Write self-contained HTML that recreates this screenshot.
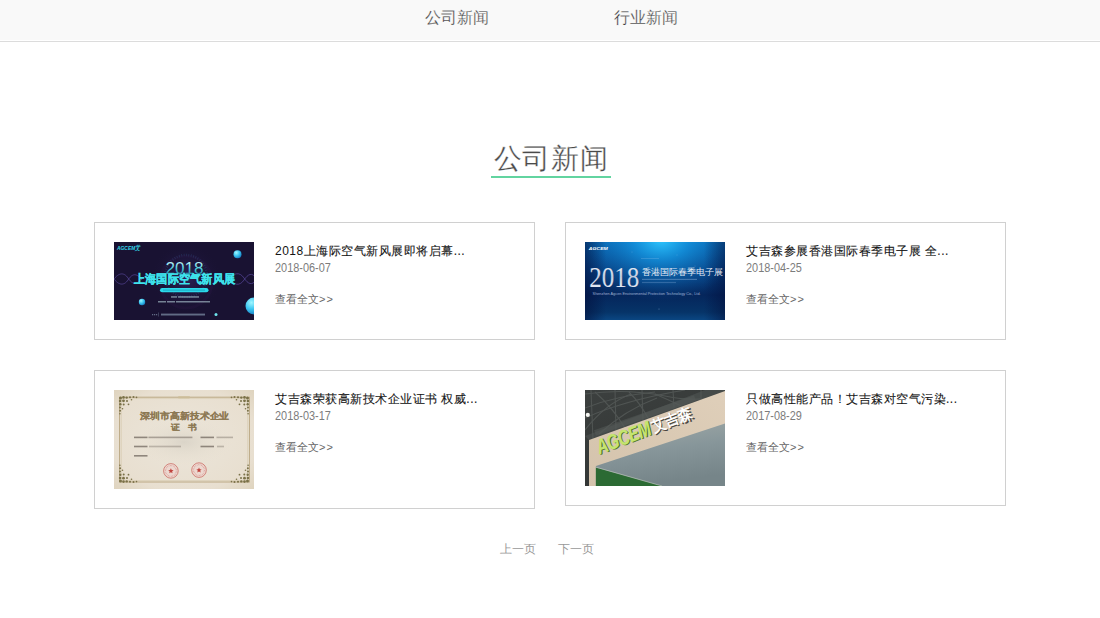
<!DOCTYPE html>
<html><head><meta charset="utf-8">
<style>
*{margin:0;padding:0;box-sizing:border-box}
html,body{width:1100px;height:618px;overflow:hidden;background:#fff;font-family:"Liberation Sans",sans-serif;color:#333}
.hdr{position:absolute;left:0;top:0;width:1100px;height:40px;background:#f9f9f9}
.hline{position:absolute;left:0;top:41px;width:1100px;height:1px;background:#dcdcdc}
.nav{position:absolute;top:8px;font-size:16px;color:#3a3a3a;-webkit-text-stroke:0.25px #f9f9f9;line-height:20px;white-space:nowrap}
.ttl{position:absolute;left:1px;top:142px;width:1100px;text-align:center;font-size:28px;line-height:34px;color:#4a4a4a;font-weight:300;letter-spacing:0.6px;-webkit-text-stroke:0.3px #fff}
.uline{position:absolute;left:491px;top:176px;width:120px;height:2px;background:#62d4a0}
.card{position:absolute;width:441px;border:1px solid #d0d0d0;background:#fff}
.pic{position:absolute;left:19px;top:19px;width:140px;overflow:hidden}
.pic svg{display:block}
.t{position:absolute;left:180px;letter-spacing:0.5px;font-size:12px;color:#151515;-webkit-text-stroke:0.1px #151515;white-space:nowrap;line-height:18px}
.d{position:absolute;left:180px;font-size:13px;color:#7c7c7c;white-space:nowrap;line-height:16px;transform:scaleX(0.84);transform-origin:0 0}
.m{position:absolute;left:180px;font-size:11px;color:#666;white-space:nowrap;line-height:16px}
.pg{position:absolute;top:541px;font-size:12px;color:#999;line-height:16px}
</style></head><body>
<div class="hdr"></div><div class="hline"></div>
<div class="nav" style="left:425px">公司新闻</div>
<div class="nav" style="left:614px">行业新闻</div>
<div class="ttl">公司新闻</div>
<div class="uline"></div>

<div class="card" style="left:94px;top:222px;height:118px">
  <div class="pic" style="height:78px"><svg width="140" height="78" viewBox="0 0 140 78">
<defs>
<radialGradient id="g1c" cx="0.35" cy="0.3" r="0.7"><stop offset="0" stop-color="#a0f6ff"/><stop offset="0.55" stop-color="#3cc6f0"/><stop offset="1" stop-color="#1b86c8"/></radialGradient>
<radialGradient id="g1glow" cx="0.5" cy="0.5" r="0.5"><stop offset="0" stop-color="#2f2560" stop-opacity="0.9"/><stop offset="1" stop-color="#191232" stop-opacity="0"/></radialGradient>
<linearGradient id="g1t" x1="0" y1="0" x2="0" y2="1"><stop offset="0" stop-color="#d8fcff"/><stop offset="0.55" stop-color="#39c9d6"/><stop offset="1" stop-color="#1b5d80"/></linearGradient>
</defs>
<rect width="140" height="78" fill="#191232"/>
<circle cx="72" cy="36" r="36" fill="url(#g1glow)"/>
<circle cx="72" cy="34" r="21" fill="none" stroke="#2d5a86" stroke-width="2.5" stroke-dasharray="0.8 1.6" opacity="0.4"/>
<circle cx="72" cy="40" r="26" fill="none" stroke="#3a1e55" stroke-width="3" opacity="0.18"/>
<g fill="none" stroke="#5b4aa0" stroke-width="0.8" opacity="0.85">
<path d="M-2 40 C4 30 10 30 14 36 S 22 44 28 36"/>
<path d="M-2 34 C4 44 10 44 14 38 S 22 30 28 38"/>
<path d="M114 38 C120 30 126 30 130 36 S 138 44 142 38"/>
<path d="M114 36 C120 44 126 44 130 38 S 138 30 142 36"/>
</g>
<text x="3" y="8.2" font-family="Liberation Sans" font-weight="bold" font-style="italic" font-size="6.2" fill="#33d9ea" textLength="23" lengthAdjust="spacingAndGlyphs">AGCEM艾</text>
<text x="70.5" y="32.3" text-anchor="middle" font-family="Liberation Sans" font-size="16" fill="url(#g1t)" textLength="38" lengthAdjust="spacingAndGlyphs">2018</text>
<text x="70.5" y="41.3" text-anchor="middle" font-family="Liberation Sans" font-weight="bold" font-size="11.5" fill="#3ee3ec" stroke="#3ee3ec" stroke-width="0.25" textLength="101" lengthAdjust="spacingAndGlyphs">上海国际空气新风展</text>
<rect x="46" y="46" width="48.5" height="4.3" rx="2.15" fill="#2bd9ea"/>
<rect x="49" y="47.4" width="42" height="1.5" fill="#1a9ab8" opacity="0.55" stroke-dasharray="1 1"/>
<g fill="#d0f2f6" opacity="0.5">
<rect x="57" y="54.2" width="6" height="1.5"/><rect x="64" y="54.2" width="21" height="1.5"/>
<rect x="44" y="59" width="8" height="1.5"/><rect x="53" y="59" width="8" height="1.5"/><rect x="62" y="59" width="34" height="1.5"/>
</g>
<g fill="#b8d8ea" opacity="0.45">
<rect x="38" y="72" width="1.2" height="1.3"/><rect x="40" y="72" width="1.2" height="1.3"/><rect x="42" y="72" width="1.2" height="1.3"/>
<rect x="44.5" y="70.5" width="0.5" height="4"/>
<rect x="47" y="71.6" width="44" height="1.9"/>
</g>
<circle cx="102" cy="72.5" r="1.5" fill="#6fe6ee"/>
<circle cx="123.5" cy="12.3" r="4" fill="url(#g1c)"/>
<circle cx="28" cy="60" r="3.2" fill="url(#g1c)"/>
<circle cx="140" cy="64" r="8.5" fill="url(#g1c)"/>
</svg></div>
  <div class="t" style="top:19px"><span style="-webkit-text-stroke:0">2018</span>上海际空气新风展即将启幕...</div>
  <div class="d" style="top:37px">2018-06-07</div>
  <div class="m" style="top:68px">查看全文<span style="letter-spacing:1.2px">&gt;&gt;</span></div>
</div>
<div class="card" style="left:565px;top:222px;height:118px">
  <div class="pic" style="height:78px"><svg width="140" height="78" viewBox="0 0 140 78">
<defs>
<linearGradient id="g2v" x1="0" y1="0" x2="0" y2="1"><stop offset="0" stop-color="#0b6fba"/><stop offset="0.3" stop-color="#084a8e"/><stop offset="0.68" stop-color="#05265c"/><stop offset="0.9" stop-color="#063468"/><stop offset="1" stop-color="#0a4682"/></linearGradient>
<radialGradient id="g2h" cx="76" cy="-3" r="62" gradientUnits="userSpaceOnUse" gradientTransform="translate(76 -3) scale(1.3 1) translate(-76 3)"><stop offset="0" stop-color="#30c8ff" stop-opacity="1"/><stop offset="0.35" stop-color="#1598e4" stop-opacity="0.7"/><stop offset="1" stop-color="#0a5aa8" stop-opacity="0"/></radialGradient>
<linearGradient id="g2e" x1="0" y1="0" x2="1" y2="0"><stop offset="0" stop-color="#020c38" stop-opacity="0.55"/><stop offset="0.15" stop-color="#020c38" stop-opacity="0"/><stop offset="0.85" stop-color="#020c38" stop-opacity="0"/><stop offset="1" stop-color="#020c38" stop-opacity="0.5"/></linearGradient>
<linearGradient id="g2b" x1="0" y1="0" x2="0" y2="1"><stop offset="0" stop-color="#ffffff"/><stop offset="0.5" stop-color="#c3cde0"/><stop offset="1" stop-color="#f2f5fb"/></linearGradient>
</defs>
<rect width="140" height="78" fill="url(#g2v)"/>
<rect width="140" height="78" fill="url(#g2h)"/>
<rect width="140" height="78" fill="url(#g2e)"/>
<text x="3.8" y="7.9" font-family="Liberation Sans" font-weight="bold" font-style="italic" font-size="4.3" fill="#ffffff" textLength="19" lengthAdjust="spacingAndGlyphs">AGCEM</text>
<rect x="56" y="16" width="18" height="1" fill="#b9d6f5" opacity="0.2"/>
<text x="4.2" y="44.5" font-family="Liberation Serif" font-size="29.5" fill="url(#g2b)" textLength="50" lengthAdjust="spacingAndGlyphs">2018</text>
<text x="56.6" y="32.8" font-family="Liberation Serif, serif" font-size="9.4" fill="#e4eaf4" textLength="81.5" lengthAdjust="spacingAndGlyphs">香港国际春季电子展</text>
<rect x="57" y="36.8" width="55" height="1.2" fill="#a9c8ee" opacity="0.35"/>
<rect x="57" y="39.9" width="34" height="1.2" fill="#a9c8ee" opacity="0.25"/>
<text x="7.6" y="52.8" font-family="Liberation Sans" font-size="3.4" fill="#c8d8f0" opacity="0.75" textLength="108" lengthAdjust="spacingAndGlyphs">Shenzhen Agcen Environmental Protection Technology Co., Ltd.</text>
<g fill="#bfe0ff" opacity="0.5"><circle cx="47" cy="10" r="0.4"/><circle cx="92" cy="13" r="0.4"/><circle cx="74" cy="67" r="0.5"/><circle cx="110" cy="24" r="0.4"/></g>
</svg></div>
  <div class="t" style="top:19px">艾吉森参展香港国际春季电子展 全...</div>
  <div class="d" style="top:37px">2018-04-25</div>
  <div class="m" style="top:68px">查看全文<span style="letter-spacing:1.2px">&gt;&gt;</span></div>
</div>
<div class="card" style="left:94px;top:370px;height:139px">
  <div class="pic" style="height:99px"><svg width="140" height="99" viewBox="0 0 140 99">
<defs>
<radialGradient id="g3a" cx="0.5" cy="0.5" r="0.7"><stop offset="0" stop-color="#ebe5da"/><stop offset="0.75" stop-color="#e8dfd0"/><stop offset="1" stop-color="#dfd4bf"/></radialGradient>
<radialGradient id="g3c" cx="0.5" cy="0.5" r="0.5"><stop offset="0" stop-color="#d6d0c4" stop-opacity="0.8"/><stop offset="1" stop-color="#e9e0cf" stop-opacity="0"/></radialGradient>

</defs>
<rect width="140" height="99" fill="url(#g3a)"/>
<ellipse cx="70" cy="52" rx="50" ry="24" fill="url(#g3c)"/>
<rect x="5.6" y="7.2" width="129.8" height="84.8" fill="none" stroke="#bba883" stroke-width="1"/>
<rect x="7.2" y="8.8" width="126.6" height="81.6" fill="none" stroke="#d3c6a8" stroke-width="0.5"/>
<rect x="64" y="6" width="12" height="2.5" rx="1" fill="#cdbd98" opacity="0.7"/>
<g fill="#7a7148" transform="translate(4.5,5.8)">
<circle cx="2" cy="2.2" r="1.5"/><circle cx="5" cy="1.6" r="1.3"/><circle cx="8.2" cy="1.8" r="1.2"/><circle cx="11.5" cy="1.5" r="1"/><circle cx="15" cy="1.2" r="1"/><circle cx="18" cy="1.6" r="0.8"/>
<circle cx="1.6" cy="5.2" r="1.3"/><circle cx="1.8" cy="8.4" r="1.2"/><circle cx="1.5" cy="11.6" r="1"/><circle cx="1.6" cy="15" r="1"/><circle cx="1.4" cy="18" r="0.8"/>
<circle cx="5" cy="5" r="1.4"/><circle cx="8.5" cy="5.2" r="1"/><circle cx="5.2" cy="8.6" r="1"/><circle cx="10" cy="8.5" r="0.9"/><circle cx="4" cy="13" r="0.8"/><circle cx="13" cy="4" r="0.8"/>
</g>
<g fill="#7a7148" transform="translate(135.5,5.8) scale(-1,1)">
<circle cx="2" cy="2.2" r="1.5"/><circle cx="5" cy="1.6" r="1.3"/><circle cx="8.2" cy="1.8" r="1.2"/><circle cx="11.5" cy="1.5" r="1"/><circle cx="15" cy="1.2" r="1"/><circle cx="18" cy="1.6" r="0.8"/>
<circle cx="1.6" cy="5.2" r="1.3"/><circle cx="1.8" cy="8.4" r="1.2"/><circle cx="1.5" cy="11.6" r="1"/><circle cx="1.6" cy="15" r="1"/><circle cx="1.4" cy="18" r="0.8"/>
<circle cx="5" cy="5" r="1.4"/><circle cx="8.5" cy="5.2" r="1"/><circle cx="5.2" cy="8.6" r="1"/><circle cx="10" cy="8.5" r="0.9"/><circle cx="4" cy="13" r="0.8"/><circle cx="13" cy="4" r="0.8"/>
</g>
<g fill="#7a7148" transform="translate(4.5,93.2) scale(1,-1)">
<circle cx="2" cy="2.2" r="1.5"/><circle cx="5" cy="1.6" r="1.3"/><circle cx="8.2" cy="1.8" r="1.2"/><circle cx="11.5" cy="1.5" r="1"/><circle cx="15" cy="1.2" r="1"/><circle cx="18" cy="1.6" r="0.8"/>
<circle cx="1.6" cy="5.2" r="1.3"/><circle cx="1.8" cy="8.4" r="1.2"/><circle cx="1.5" cy="11.6" r="1"/><circle cx="1.6" cy="15" r="1"/><circle cx="1.4" cy="18" r="0.8"/>
<circle cx="5" cy="5" r="1.4"/><circle cx="8.5" cy="5.2" r="1"/><circle cx="5.2" cy="8.6" r="1"/><circle cx="10" cy="8.5" r="0.9"/><circle cx="4" cy="13" r="0.8"/><circle cx="13" cy="4" r="0.8"/>
</g>
<g fill="#7a7148" transform="translate(135.5,93.2) scale(-1,-1)">
<circle cx="2" cy="2.2" r="1.5"/><circle cx="5" cy="1.6" r="1.3"/><circle cx="8.2" cy="1.8" r="1.2"/><circle cx="11.5" cy="1.5" r="1"/><circle cx="15" cy="1.2" r="1"/><circle cx="18" cy="1.6" r="0.8"/>
<circle cx="1.6" cy="5.2" r="1.3"/><circle cx="1.8" cy="8.4" r="1.2"/><circle cx="1.5" cy="11.6" r="1"/><circle cx="1.6" cy="15" r="1"/><circle cx="1.4" cy="18" r="0.8"/>
<circle cx="5" cy="5" r="1.4"/><circle cx="8.5" cy="5.2" r="1"/><circle cx="5.2" cy="8.6" r="1"/><circle cx="10" cy="8.5" r="0.9"/><circle cx="4" cy="13" r="0.8"/><circle cx="13" cy="4" r="0.8"/>
</g>
<text x="70.8" y="28.6" text-anchor="middle" font-family="Liberation Sans" font-weight="bold" font-size="9" fill="#8c7852" stroke="#8c7852" stroke-width="0.1" textLength="89" lengthAdjust="spacingAndGlyphs">深圳市高新技术企业</text>
<text x="70" y="39.8" text-anchor="middle" font-family="Liberation Sans" font-weight="bold" font-size="8" fill="#8c7852" stroke="#8c7852" stroke-width="0.1" textLength="26.5" lengthAdjust="spacingAndGlyphs">证　书</text>
<g fill="#6a6058" opacity="0.7">
<rect x="20" y="46.6" width="13.5" height="1.6"/><rect x="34.4" y="46.6" width="44" height="1.6" opacity="0.7"/>
<rect x="86.5" y="46.6" width="13.5" height="1.6"/><rect x="102.5" y="46.6" width="16.5" height="1.6" opacity="0.55"/>
<rect x="20" y="55.7" width="13.5" height="1.6"/><rect x="35" y="55.7" width="32" height="1.6" opacity="0.5"/>
<rect x="86.5" y="55.7" width="13.5" height="1.6"/><rect x="103" y="55.7" width="7" height="1.6" opacity="0.5"/>
<rect x="20" y="65" width="13.5" height="1.6"/>
</g>
<g fill="#eed8d0" stroke="#c9615b" stroke-width="0.8" opacity="0.9">
<circle cx="56.9" cy="80.9" r="7.3"/><circle cx="85" cy="80.1" r="7.3"/>
</g>
<g fill="none" stroke="#d2827c" stroke-width="1.2" stroke-dasharray="0.6 0.9" opacity="0.7">
<circle cx="56.9" cy="80.9" r="5.4"/><circle cx="85" cy="80.1" r="5.4"/>
</g>
<g fill="#c0433d"><path d="M56.9 78.3 l0.8 1.8 1.9 0.1 -1.5 1.2 0.5 1.9 -1.7 -1.1 -1.7 1.1 0.5 -1.9 -1.5 -1.2 1.9 -0.1z"/><path d="M85 77.5 l0.8 1.8 1.9 0.1 -1.5 1.2 0.5 1.9 -1.7 -1.1 -1.7 1.1 0.5 -1.9 -1.5 -1.2 1.9 -0.1z"/></g>
</svg></div>
  <div class="t" style="top:19px">艾吉森荣获高新技术企业证书 权威...</div>
  <div class="d" style="top:37px">2018-03-17</div>
  <div class="m" style="top:68px">查看全文<span style="letter-spacing:1.2px">&gt;&gt;</span></div>
</div>
<div class="card" style="left:565px;top:370px;height:136px">
  <div class="pic" style="height:96px"><svg width="140" height="96" viewBox="0 0 140 96">
<defs>
<linearGradient id="g4c" x1="0" y1="0" x2="0.25" y2="1"><stop offset="0" stop-color="#a0a9a7"/><stop offset="0.5" stop-color="#87969a"/><stop offset="1" stop-color="#768589"/></linearGradient>
<linearGradient id="g4b" x1="0" y1="1" x2="1" y2="0"><stop offset="0" stop-color="#d4c3ac"/><stop offset="1" stop-color="#dfcfba"/></linearGradient>
<linearGradient id="g4d" x1="0" y1="0" x2="0.4" y2="1"><stop offset="0" stop-color="#3c403f"/><stop offset="1" stop-color="#323534"/></linearGradient>
</defs>
<rect width="140" height="96" fill="url(#g4d)"/>
<g stroke="#5a5f5d" stroke-width="1.1" fill="none" opacity="0.7">
<path d="M0 4 Q40 -2 80 6 T140 2"/>
<path d="M0 18 Q30 6 70 2"/>
<path d="M0 28 Q40 10 100 0"/>
<path d="M6 0 L8 50"/><path d="M30 0 L31 40"/><path d="M57 0 L58 32"/><path d="M88 0 L89 18"/><path d="M116 0 L116 8"/>
<path d="M0 40 Q20 14 46 4"/><path d="M14 44 Q40 20 72 8"/>
<path d="M10 2 Q28 18 40 38"/><path d="M44 2 Q56 14 64 30"/><path d="M70 4 Q84 10 96 16"/>
</g>
<polygon points="0,46 4,50 140,1 140,0 120,0" fill="#545958" opacity="0.5"/>
<path d="M10 43 L110 8" stroke="#555a58" stroke-width="6" opacity="0.55"/>
<circle cx="2.8" cy="24.9" r="2.1" fill="#f6f6f2"/>
<polygon points="4,50 140,1 140,96 4,96" fill="url(#g4b)"/>
<polygon points="10.9,76 140,33.4 140,96 10.9,96" fill="url(#g4c)"/>
<polygon points="10.9,77.5 10.9,96 77,96" fill="#2b6a33"/>
<path d="M10.9 77.2 L77 96" stroke="#c6cdc4" stroke-width="0.9" opacity="0.7"/>
<g transform="translate(14.5,64.5) rotate(-21)">
<text x="0" y="0" font-family="Liberation Sans" font-weight="bold" font-style="italic" font-size="21" fill="#4f7424" textLength="57" lengthAdjust="spacingAndGlyphs" transform="translate(0.9,0.9)">AGCEM</text>
<text x="0" y="0" font-family="Liberation Sans" font-weight="bold" font-style="italic" font-size="21" fill="#c3e571" textLength="57" lengthAdjust="spacingAndGlyphs">AGCEM</text>
<text x="59" y="-1" font-family="Liberation Sans" font-weight="bold" font-size="15" fill="#4a4640" textLength="42" lengthAdjust="spacingAndGlyphs" transform="translate(0.9,0.9)">艾吉森</text>
<text x="59" y="-1" font-family="Liberation Sans" font-weight="bold" font-size="15" fill="#fdfdfd" textLength="42" lengthAdjust="spacingAndGlyphs">艾吉森</text>
</g>
</svg></div>
  <div class="t" style="top:19px">只做高性能产品！艾吉森对空气污染...</div>
  <div class="d" style="top:37px">2017-08-29</div>
  <div class="m" style="top:68px">查看全文<span style="letter-spacing:1.2px">&gt;&gt;</span></div>
</div>

<div class="pg" style="left:500px">上一页</div>
<div class="pg" style="left:558px">下一页</div>
</body></html>
